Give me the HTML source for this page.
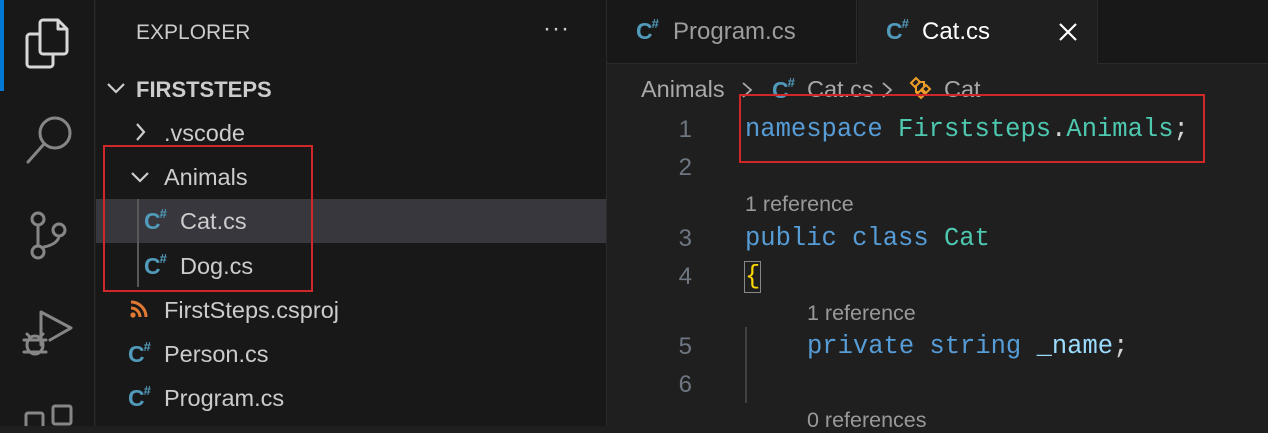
<!DOCTYPE html>
<html><head><meta charset="utf-8"><style>
*{margin:0;padding:0;box-sizing:border-box}
body{width:1268px;height:426px;overflow:hidden;background:#1f1f1f;font-family:"Liberation Sans",sans-serif;position:relative}
.a{position:absolute;white-space:nowrap}
.side{color:#cccccc;font-size:23.5px}
.cs{position:absolute;color:#519aba;font-weight:bold;font-size:23px;font-family:"Liberation Sans",sans-serif;letter-spacing:-1px}
.cs sup{font-size:13px;position:relative;top:-2px}
.mono{font-family:"Liberation Mono",monospace;font-size:25.5px}
.ln{position:absolute;width:60px;text-align:right;left:632px;color:#6e7681;font-family:"Liberation Sans",sans-serif;font-size:24px}
.lens{position:absolute;color:#999;font-size:21.5px}
</style></head><body>
<!-- activity bar -->
<div class="a" style="left:0;top:0;width:95px;height:426px;background:#181818;border-right:1px solid #2b2b2b"></div>
<div class="a" style="left:0;top:0;width:4px;height:91px;background:#0078d4"></div>
<svg class="a" style="left:0;top:0" width="95" height="426" fill="none" stroke-width="3" stroke-linecap="round" stroke-linejoin="round">
<g stroke="#d7d7d7"><path d="M38 34 H30 a3 3 0 0 0-3 3 V64 a3 3 0 0 0 3 3 H50 a3 3 0 0 0 3-3 V55"/><path d="M40 23 a3 3 0 0 1 3-3 H58 L67 29 V51 a3 3 0 0 1-3 3 H43 a3 3 0 0 1-3-3 Z"/><path d="M58 21 V29 H66"/></g>
<g stroke="#868686"><circle cx="55" cy="133" r="15"/><path d="M44 144 L28 162"/>
<circle cx="38" cy="219" r="6"/><circle cx="38" cy="252" r="6"/><circle cx="59" cy="230" r="6"/><path d="M38 225 V246 M59 236 Q58 244 44 247"/>
<path d="M41 345 V312 L71 328 L50 340"/><ellipse cx="35" cy="345" rx="8" ry="9"/><path d="M24 340 H46 M24 352 H46 M27 334 L31 338 M43 334 L39 338"/>
<rect x="26" y="413" width="17" height="17" rx="2"/><rect x="53" y="406" width="18" height="18" rx="2"/></g>
</svg>
<!-- sidebar -->
<div class="a" style="left:96px;top:0;width:511px;height:426px;background:#181818;border-right:1px solid #2b2b2b"></div>
<div class="a side" style="left:136px;top:21px;font-size:21px">EXPLORER</div>
<div class="a side" style="left:543px;top:15px;font-size:24px;letter-spacing:1px">···</div>
<svg class="a" style="left:96px;top:0" width="220" height="426" fill="none" stroke="#ccc" stroke-width="2.2">
<path d="M12 84 L20 92 L28 84"/><path d="M41 124 L48 132 L41 140"/><path d="M36 173 L44 181 L52 173"/>
</svg>
<div class="a side" style="left:136px;top:77px;font-weight:bold;font-size:22px">FIRSTSTEPS</div>
<div class="a side" style="left:164px;top:120px">.vscode</div>
<div class="a side" style="left:164px;top:164px">Animals</div>
<div class="a" style="left:96px;top:199px;width:510px;height:44px;background:#37373d"></div>
<div class="a" style="left:137px;top:199px;width:2px;height:88px;background:#585858"></div>
<div class="cs" style="left:144px;top:208px">C<sup>#</sup></div>
<div class="a side" style="left:180px;top:208px">Cat.cs</div>
<div class="cs" style="left:144px;top:253px">C<sup>#</sup></div>
<div class="a side" style="left:180px;top:253px">Dog.cs</div>
<svg class="a" style="left:130px;top:300px" width="20" height="20"><circle cx="3" cy="15" r="2.6" fill="#e37933"/><path d="M1 8 A9 9 0 0 1 10 17 M1 2 A15 15 0 0 1 16 17" stroke="#e37933" stroke-width="3" fill="none"/></svg>
<div class="a side" style="left:164px;top:297px">FirstSteps.csproj</div>
<div class="cs" style="left:128px;top:341px">C<sup>#</sup></div>
<div class="a side" style="left:164px;top:341px">Person.cs</div>
<div class="cs" style="left:128px;top:385px">C<sup>#</sup></div>
<div class="a side" style="left:164px;top:385px">Program.cs</div>
<div class="a" style="left:103px;top:145px;width:210px;height:147px;border:2px solid #d0282a"></div>
<!-- tabs -->
<div class="a" style="left:607px;top:0;width:661px;height:64px;background:#181818;border-bottom:1px solid #2b2b2b"></div>
<div class="a" style="left:607px;top:0;width:250px;height:64px;border-right:1px solid #2b2b2b"></div>
<div class="a" style="left:858px;top:0;width:240px;height:65px;background:#1f1f1f;border-right:1px solid #2b2b2b"></div>
<div class="cs" style="left:636px;top:18px">C<sup>#</sup></div>
<div class="a" style="left:673px;top:18px;color:#9d9d9d;font-size:24px">Program.cs</div>
<div class="cs" style="left:886px;top:18px">C<sup>#</sup></div>
<div class="a" style="left:922px;top:18px;color:#fff;font-size:24px">Cat.cs</div>
<svg class="a" style="left:1058px;top:22px" width="20" height="20" stroke="#fff" stroke-width="2.2"><path d="M2 2 L18 18 M18 2 L2 18"/></svg>
<!-- breadcrumbs -->
<div class="a" style="left:641px;top:76px;color:#a9a9a9;font-size:23.5px">Animals</div>
<svg class="a" style="left:740px;top:80px" width="14" height="20" fill="none" stroke="#a9a9a9" stroke-width="1.8"><path d="M3 3 L11 10 L3 17"/></svg>
<div class="cs" style="left:772px;top:77px">C<sup>#</sup></div>
<div class="a" style="left:807px;top:76px;color:#a9a9a9;font-size:23.5px">Cat.cs</div>
<svg class="a" style="left:880px;top:80px" width="14" height="20" fill="none" stroke="#a9a9a9" stroke-width="1.8"><path d="M3 3 L11 10 L3 17"/></svg>
<svg class="a" style="left:908px;top:76px" width="26" height="26" fill="none" stroke="#ee9d28" stroke-width="2"><path d="M3 7 L8 2 L12 6 L7 11 Z M14 13 L18 9 L22 13 L18 17 Z M9 18 L13 14 L17 18 L13 22 Z M8 10 V16 H11 M12 6 H16 V10"/></svg>
<div class="a" style="left:944px;top:76px;color:#a9a9a9;font-size:23.5px">Cat</div>
<!-- code -->
<div class="ln" style="top:116px">1</div>
<div class="ln" style="top:154px">2</div>
<div class="lens" style="left:745px;top:192px">1 reference</div>
<div class="ln" style="top:225px">3</div>
<div class="ln" style="top:263px">4</div>
<div class="lens" style="left:807px;top:301px">1 reference</div>
<div class="ln" style="top:333px">5</div>
<div class="ln" style="top:371px">6</div>
<div class="lens" style="left:807px;top:408px">0 references</div>
<div class="a mono" style="left:745px;top:115px"><span style="color:#569cd6">namespace</span> <span style="color:#4ec9b0">Firststeps</span><span style="color:#d4d4d4">.</span><span style="color:#4ec9b0">Animals</span><span style="color:#d4d4d4">;</span></div>
<div class="a mono" style="left:745px;top:224px"><span style="color:#569cd6">public class</span> <span style="color:#4ec9b0">Cat</span></div>
<div class="a mono" style="left:745px;top:262px;color:#ffd700;outline:1px solid #888;line-height:30px">{</div>
<div class="a" style="left:745px;top:327px;width:2px;height:76px;background:#404040"></div>
<div class="a mono" style="left:807px;top:332px"><span style="color:#569cd6">private string</span> <span style="color:#9cdcfe">_name</span><span style="color:#d4d4d4">;</span></div>
<div class="a" style="left:739px;top:94px;width:466px;height:69px;border:2px solid #d0282a"></div>
</body></html>
